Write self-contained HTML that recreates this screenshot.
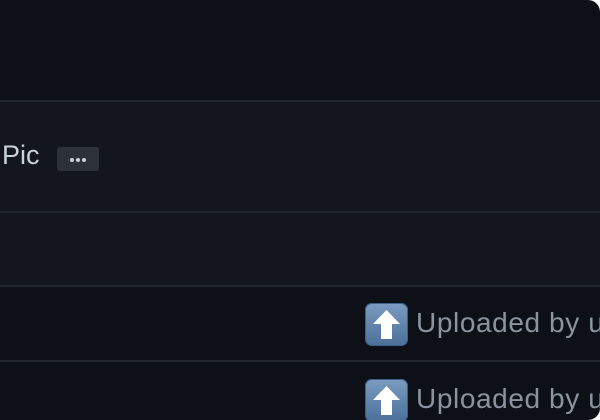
<!DOCTYPE html>
<html><head><style>
html,body{margin:0;padding:0;background:#fff;}
.page{position:relative;width:600px;height:420px;background:#0d1117;border-radius:0 12px 12px 0;overflow:hidden;font-family:"Liberation Sans",sans-serif;}
.sec{position:absolute;left:0;right:0;background:#13171d;}
.line{position:absolute;left:0;right:0;height:2px;background:#21262d;}
.pic{position:absolute;left:2px;top:140px;font-size:27px;color:#c9d1d9;}
.btn{position:absolute;left:57px;top:147px;width:42px;height:24px;background:#2d3239;border-radius:3px;}
.btn i{position:absolute;top:11px;width:4px;height:4px;border-radius:2px;background:#c9d1d9;}
.emo{position:absolute;left:365px;width:43px;height:43px;border-radius:7px;background:linear-gradient(#7c9cc0,#4a6f99);box-shadow:inset 0 0 0 1px #3d5f88;}
.emo svg{position:absolute;left:0;top:0;}
.up{position:absolute;left:416px;font-size:28px;letter-spacing:0.6px;color:#8b949e;white-space:nowrap;}
</style></head><body>
<div class="page">
<div class="line" style="top:100px"></div>
<div class="sec" style="top:102px;height:109px"></div>
<div class="line" style="top:211px"></div>
<div class="sec" style="top:213px;height:72px"></div>
<div class="line" style="top:285px"></div>
<div class="line" style="top:360px"></div>
<div class="pic">Pic</div>
<div class="btn"><i style="left:13px"></i><i style="left:19px"></i><i style="left:25px"></i></div>
<div class="emo" style="top:303px"><svg width="43" height="43"><path d="M21.5 7 L35 21 H27 V36 H16 V21 H8 Z" fill="#fff"/></svg></div>
<div class="up" style="top:307px">Uploaded by u</div>
<div class="emo" style="top:379px"><svg width="43" height="43"><path d="M21.5 7 L35 21 H27 V36 H16 V21 H8 Z" fill="#fff"/></svg></div>
<div class="up" style="top:383px">Uploaded by u</div>
</div>
</body></html>
